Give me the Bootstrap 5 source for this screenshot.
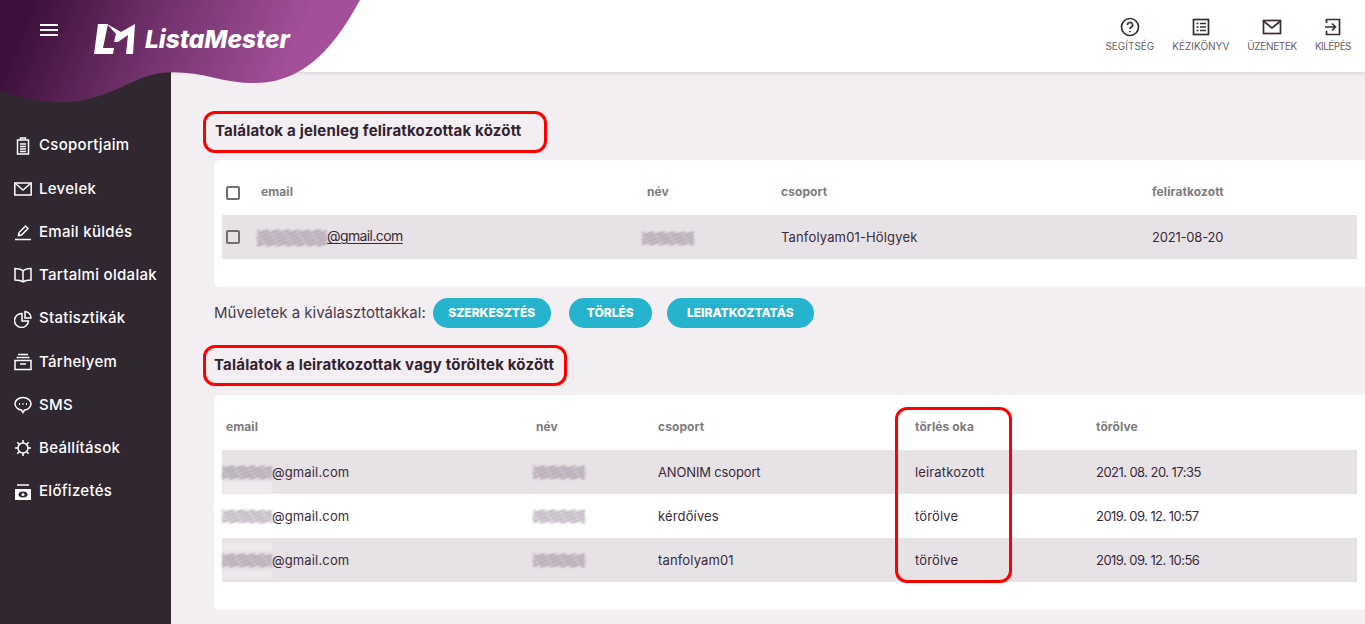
<!DOCTYPE html>
<html lang="hu">
<head>
<meta charset="utf-8">
<title>ListaMester</title>
<link href="https://cdn.jsdelivr.net/npm/bootstrap@5.3.0/dist/css/bootstrap.min.css" rel="stylesheet">
<style>
html,body{height:100%;overflow:hidden}
body{font-family:Inter,"Noto Sans",sans-serif;background:#f2eef2;color:#3a2a38;font-size:13px;display:flex;flex-direction:column}
.lm-top{height:72px;flex:0 0 72px;background:#fff;box-shadow:0 1px 4px rgba(0,0,0,.12);position:relative;z-index:3}
.lm-blob{position:absolute;left:0;top:0;width:365px;height:110px;pointer-events:none}
.lm-burger{position:absolute;left:40px;top:24px;width:18px;height:12px;border-top:2px solid #fff;border-bottom:2px solid #fff}
.lm-burger::after{content:"";position:absolute;left:0;right:0;top:3px;height:2px;background:#fff}
.lm-logo{position:relative;margin-left:94px;margin-top:24px;height:30px}
.lm-wordmark{font-size:24.5px;font-weight:800;font-style:italic;color:#fff;line-height:30px;margin-left:9px;letter-spacing:-.05px;white-space:nowrap}
.lm-tools{gap:18px;padding:17px 14px 0 0}
.lm-tool{font-size:10px;color:#6a5c68;text-transform:uppercase;line-height:12px;text-decoration:none;text-align:center}
.lm-tool-n{letter-spacing:-.35px}
.lm-tool-k{letter-spacing:-.55px}
.lm-tool svg{display:block;margin:0 auto 3px;width:20px;height:20px;fill:none;stroke:#3a2a38;stroke-width:1.7}
.lm-body{flex:1 1 auto;min-height:0}
.lm-side{width:171px;flex:0 0 171px;background:#312730;padding-top:52px}
.lm-side .nav-link{height:43.25px;padding:0 0 0 14px;color:#fff;font-weight:500;font-size:15px;letter-spacing:.3px;display:flex;align-items:center;gap:7px;white-space:nowrap}
.lm-side svg{width:18px;height:18px;flex:0 0 18px;fill:none;stroke:#fff;stroke-width:1.5}
.lm-main{padding:39px 0 0 32px;min-width:0;position:relative}
.lm-head{border:3px solid #f00;border-radius:12px;height:42px;display:flex;align-items:center;padding:0 0 3px 9px;font-size:15px;letter-spacing:.2px;font-weight:700;color:#33222f;margin:0}
.lm-head-a{width:344px;margin-bottom:7px}
.lm-head-b{width:364px;height:41px;padding-left:8px;padding-bottom:2px;margin-bottom:9px}
.lm-panel{background:#fff;border-radius:6px 0 0 6px;margin-left:11px;padding:0 8px 28px;border:0}
.lm-panel .table{margin:0;table-layout:fixed;width:1135px;--bs-table-bg:transparent;--bs-table-color:#3a2a38;font-size:13px}
.lm-panel th{padding:24px 4px 15px;line-height:16px;font-size:12px;font-weight:700;color:#7d7a7c;letter-spacing:.1px}
.lm-panel td{padding:0 4px;height:44px;vertical-align:middle;line-height:16px;letter-spacing:.15px}
.lm-panel tbody tr.lm-band td{background:#e7e2e6}
.lm-check{width:14px;height:14px;border:2px solid #6f6f6f;border-radius:2px;display:block}
.c1a{width:35px}.c1b{width:386px}.c1c{width:134px}.c1d{width:371px}.c1e{width:209px}
.c2a{width:310px}.c2b{width:122px}.c2c{width:257px}.c2d{width:181px}.c2e{width:265px}
.lm-panel td.lm-date{letter-spacing:-.55px}
.lm-panel td.lm-date1{letter-spacing:-.2px}
.lm-panel td.lm-caps{letter-spacing:-.15px}
.lm-panel td.lm-t2{padding-bottom:1px}
.lm-mask{display:inline-block;vertical-align:middle;position:relative;height:13px;background:repeating-linear-gradient(160deg,#7a667c 0 1.2px,rgba(190,175,188,.35) 1.2px 3.500px);filter:blur(.85px);opacity:.8}
.lm-mask-sm{width:50px;margin-left:-4px}
.lm-mask-name{width:52px;margin-left:-3px}
.lm-mask-lg{width:70px;margin-left:-4px;height:16px}
.lm-soft::before,.lm-soft::after{content:"";position:absolute;left:0;right:0;background:#f0edef}
.lm-soft-b::after{top:16px;height:12px}
.lm-soft-ab::before{bottom:17px;height:7px}
.lm-soft-ab::after{top:17px;height:7px}
.lm-link{color:#3a2a38;font-size:14px;letter-spacing:-.6px;text-decoration:underline;text-underline-offset:2px}
.lm-name-t1{margin-left:-5px}
.lm-actions{margin:11px 0 17px 11px;height:30px}
.lm-actions span{font-size:15px;color:#4a3b48;margin-right:7px}
.lm-btn{background:#25b3cd;color:#fff;border:0;height:30px;border-radius:15px;font-size:12px;font-weight:800;padding:0}
.lm-btn:hover{background:#25b3cd;color:#fff}
.b1{width:118px;margin-right:18px}.b2{width:83px;margin-right:15px}.b3{width:147px}
.lm-redbox{position:absolute;left:724px;top:335px;width:117px;height:176px;border:3px solid #f00;border-radius:12px;pointer-events:none}
</style>
</head>
<body>
<header class="lm-top d-flex justify-content-between">
  <svg class="lm-blob" viewBox="0 0 365 110" aria-hidden="true">
    <defs><linearGradient id="lmg" x1="30" y1="10" x2="270" y2="110" gradientUnits="userSpaceOnUse"><stop offset="0" stop-color="#3d1039"/><stop offset=".5" stop-color="#74336e"/><stop offset="1" stop-color="#a34f9a"/></linearGradient></defs>
    <path fill="url(#lmg)" d="M0 0H360C342 33 322 60 296 73C270 87 240 84 215 78C195 73 178 71 160 73C130 78 110 100 65 102C40 103 20 97 0 91Z"/>
  </svg>
  <a class="lm-burger" href="#" aria-label="menü"></a>
  <div class="lm-logo d-flex">
    <svg width="42" height="30" viewBox="0 0 42 30" fill="#fff" aria-hidden="true">
      <polygon points="4,0 14,0 9,24 20,24 19,30 0,30"/>
      <polygon points="13,0 27,8 41,0 39,30 32,30 34,11 24,18 20,18 22,10"/>
    </svg>
    <span class="lm-wordmark">ListaMester</span>
  </div>
  <nav class="lm-tools d-flex">
    <a class="lm-tool" href="#"><svg viewBox="0 0 20 20"><circle cx="10" cy="10" r="8.500"/><path d="M7.500 8a2.500 2.500 0 1 1 3.600 2.200c-.8.4-1.100 1-1.100 1.800"/><path d="M10 14v1.200"/></svg>Segítség</a>
    <a class="lm-tool" href="#"><svg viewBox="0 0 20 20"><rect x="2.500" y="2.500" width="15" height="15"/><path d="M5.500 6.500h2M5.500 10h2M5.500 13.500h2M9 6.500h6M9 10h6M9 13.500h6"/></svg>Kézikönyv</a>
    <a class="lm-tool lm-tool-n" href="#"><svg viewBox="0 0 20 20"><rect x="1.500" y="3.500" width="17" height="13"/><path d="M2 4.500l8 6.500 8-6.500"/></svg>Üzenetek</a>
    <a class="lm-tool lm-tool-k" href="#"><svg viewBox="0 0 20 20"><path d="M3.500 6V2.500h13v15h-13V14"/><path d="M2 10h10M9 6.500l3.500 3.500L9 13.500"/></svg>Kilépés</a>
  </nav>
</header>
<div class="d-flex lm-body">
  <aside class="lm-side">
    <nav class="nav flex-column">
      <a class="nav-link" href="#"><svg viewBox="0 0 18 18"><rect x="3.500" y="3" width="11" height="14"/><path d="M6.500 3V1h5v2M6 7h6M6 9.500h6M6 12h6M6 14.500h6"/></svg>Csoportjaim</a>
      <a class="nav-link" href="#"><svg viewBox="0 0 18 18"><rect x=".8" y="3" width="16.400" height="12"/><path d="M1.500 3.500L9 10l7.500-6.500"/></svg>Levelek</a>
      <a class="nav-link" href="#"><svg viewBox="0 0 18 18"><path d="M4.500 12.500l.6-3L11.500 3l2.500 2.500L7.500 12zM1 16.500h16"/></svg>Email küldés</a>
      <a class="nav-link" href="#"><svg viewBox="0 0 18 18"><path d="M9 5C7 3 4 2.500 1 2.500v11.500c3 0 6 .5 8 2 2-1.500 5-2 8-2V2.500C14 2.500 11 3 9 5zM9 5v11"/></svg>Tartalmi oldalak</a>
      <a class="nav-link" href="#"><svg viewBox="0 0 18 18"><path d="M8 3.500a7 7 0 1 0 6.500 7.500H8z"/><path d="M11 1.500v6.500h6A6.500 6.500 0 0 0 11 1.500z"/></svg>Statisztikák</a>
      <a class="nav-link" href="#"><svg viewBox="0 0 18 18"><path d="M4 1.500h10M2.500 4.500h13"/><rect x="1" y="7.500" width="16" height="9"/><path d="M6 11h6"/></svg>Tárhelyem</a>
      <a class="nav-link" href="#"><svg viewBox="0 0 18 18"><path d="M9 1.500c4.500 0 8 2.700 8 6.300s-3.500 6.200-6.500 6.200L9 16.500 7.500 14C4.500 13.800 1 11.400 1 7.800S4.500 1.500 9 1.500z"/><path d="M5 8h1M8.500 8h1M12 8h1" stroke-width="2"/></svg>SMS</a>
      <a class="nav-link" href="#"><svg viewBox="0 0 18 18"><circle cx="9" cy="9" r="5"/><path d="M9 1v3M9 14v3M1 9h3M14 9h3M3.300 3.300l2.200 2.200M12.500 12.500l2.200 2.200M14.700 3.300l-2.200 2.200M5.500 12.500l-2.200 2.200"/></svg>Beállítások</a>
      <a class="nav-link" href="#"><svg viewBox="0 0 18 18"><path d="M3 2h12"/><path d="M1 6h16v11H1z" fill="#fff" stroke="none"/><ellipse cx="9" cy="11.500" rx="4.500" ry="3" fill="#312730" stroke="none"/><circle cx="9" cy="11.500" r="1.500" fill="#fff" stroke="none"/></svg>Előfizetés</a>
    </nav>
  </aside>
  <main class="lm-main flex-grow-1">
    <h2 class="lm-head lm-head-a">Találatok a jelenleg feliratkozottak között</h2>
    <section class="lm-panel">
      <table class="table table-borderless">
        <colgroup><col class="c1a"><col class="c1b"><col class="c1c"><col class="c1d"><col class="c1e"></colgroup>
        <thead><tr><th><i class="lm-check"></i></th><th>email</th><th>név</th><th>csoport</th><th>feliratkozott</th></tr></thead>
        <tbody>
          <tr class="lm-band"><td><i class="lm-check"></i></td><td><i class="lm-mask lm-mask-lg"></i><a class="lm-link" href="#">@gmail.com</a></td><td><i class="lm-mask lm-mask-name lm-name-t1"></i></td><td>Tanfolyam01-Hölgyek</td><td class="lm-date1">2021-08-20</td></tr>
        </tbody>
      </table>
    </section>
    <div class="lm-actions d-flex align-items-center">
      <span>Műveletek a kiválasztottakkal:</span>
      <button class="btn lm-btn b1">SZERKESZTÉS</button>
      <button class="btn lm-btn b2">TÖRLÉS</button>
      <button class="btn lm-btn b3">LEIRATKOZTATÁS</button>
    </div>
    <h2 class="lm-head lm-head-b">Találatok a leiratkozottak vagy töröltek között</h2>
    <section class="lm-panel">
      <table class="table table-borderless">
        <colgroup><col class="c2a"><col class="c2b"><col class="c2c"><col class="c2d"><col class="c2e"></colgroup>
        <thead><tr><th>email</th><th>név</th><th>csoport</th><th>törlés oka</th><th>törölve</th></tr></thead>
        <tbody>
          <tr class="lm-band"><td class="lm-t2"><i class="lm-mask lm-mask-sm lm-soft lm-soft-b"></i>@gmail.com</td><td class="lm-t2"><i class="lm-mask lm-mask-name"></i></td><td class="lm-t2 lm-caps">ANONIM csoport</td><td class="lm-t2">leiratkozott</td><td class="lm-t2 lm-date">2021. 08. 20. 17:35</td></tr>
          <tr><td class="lm-t2"><i class="lm-mask lm-mask-sm"></i>@gmail.com</td><td class="lm-t2"><i class="lm-mask lm-mask-name"></i></td><td class="lm-t2">kérdőíves</td><td class="lm-t2">törölve</td><td class="lm-t2 lm-date">2019. 09. 12. 10:57</td></tr>
          <tr class="lm-band"><td class="lm-t2"><i class="lm-mask lm-mask-sm lm-soft lm-soft-ab"></i>@gmail.com</td><td class="lm-t2"><i class="lm-mask lm-mask-name"></i></td><td class="lm-t2">tanfolyam01</td><td class="lm-t2">törölve</td><td class="lm-t2 lm-date">2019. 09. 12. 10:56</td></tr>
        </tbody>
      </table>
    </section>
    <div class="lm-redbox"></div>
  </main>
</div>
</body>
</html>
